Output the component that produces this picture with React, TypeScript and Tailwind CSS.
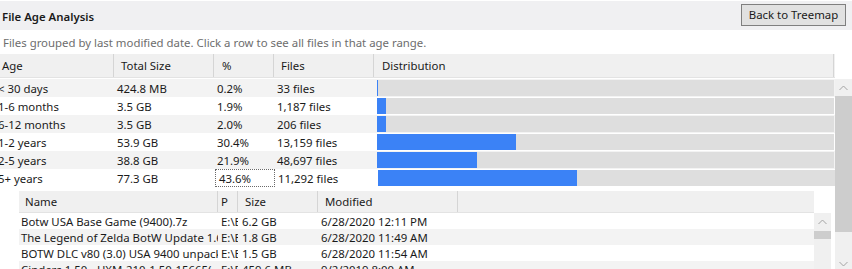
import React from "react";

const rows = [
  { age: "< 30 days", size: "424.8 MB", pct: "0.2%", files: "33 files", w: 0.2 },
  { age: "1-6 months", size: "3.5 GB", pct: "1.9%", files: "1,187 files", w: 1.9 },
  { age: "6-12 months", size: "3.5 GB", pct: "2.0%", files: "206 files", w: 2.0 },
  { age: "1-2 years", size: "53.9 GB", pct: "30.4%", files: "13,159 files", w: 30.4 },
  { age: "2-5 years", size: "38.8 GB", pct: "21.9%", files: "48,697 files", w: 21.9 },
  { age: "5+ years", size: "77.3 GB", pct: "43.6%", files: "11,292 files", w: 43.6 },
];

const files = [
  { name: "Botw USA Base Game (9400).7z", p: "E:\\BOTW", size: "6.2 GB", mod: "6/28/2020 12:11 PM" },
  { name: "The Legend of Zelda BotW Update 1.6.0", p: "E:\\BOTW", size: "1.8 GB", mod: "6/28/2020 11:49 AM" },
  { name: "BOTW DLC v80 (3.0) USA 9400 unpacked", p: "E:\\BOTW", size: "1.5 GB", mod: "6/28/2020 11:54 AM" },
  { name: "Cinders 1.50 - HXM-210-1.50-15665(", p: "E:\\BOTW", size: "459.6 MB", mod: "9/2/2019 8:00 AM" },
];

function Up() {
  return (
    <svg width="9" height="6" viewBox="0 0 9 6" className="block">
      <polyline points="0.5,5 4.5,1 8.5,5" fill="none" stroke="#a3a3a3" strokeWidth="1" />
    </svg>
  );
}
function Down() {
  return (
    <svg width="9" height="6" viewBox="0 0 9 6" className="block">
      <polyline points="0.5,1 4.5,5 8.5,1" fill="none" stroke="#a3a3a3" strokeWidth="1" />
    </svg>
  );
}

export default function App() {
  return (
    <div
      className="w-[852px] h-[269px] overflow-hidden bg-white text-[11.4px] leading-none text-[#1a1a1a] flex flex-col"
      style={{ fontFamily: '"Noto Sans", "Open Sans", sans-serif' }}
    >
      {/* Title bar */}
      <div className="h-[30px] shrink-0 border-t border-white bg-[#f0f0f2] flex justify-between">
        <div className="pl-[2px] self-center pt-[2px] font-semibold text-[11.4px] text-[#1a1a1a]">File Age Analysis</div>
        <button className="mt-[3px] mr-[6px] w-[105px] h-[22px] bg-[#e1e1e1] border border-[#7f7f7f] text-[11.4px] text-[#1a1a1a] flex items-center justify-center">
          Back to Treemap
        </button>
      </div>
      {/* Subtitle */}
      <div className="h-[24px] shrink-0 flex items-center pl-[3px] pt-[1px] text-[#6d6d6d]">
        Files grouped by last modified date. Click a row to see all files in that age range.
      </div>
      {/* Grid header */}
      <div className="h-[25px] shrink-0 flex">
        <div className="w-[835px] overflow-hidden">
          <div className="-ml-[5px] flex h-[24px] w-[840px] bg-[#f0f0f0] border-b border-[#e3e3e3]">
            <div className="w-[119px] border-r border-[#d5d5d5] pl-[7px] flex items-center">Age</div>
            <div className="w-[100px] border-r border-[#d5d5d5] pl-[7px] flex items-center">Total Size</div>
            <div className="w-[60px] border-r border-[#d5d5d5] pl-[8px] flex items-center">%</div>
            <div className="w-[100px] border-r border-[#d5d5d5] pl-[7px] flex items-center">Files</div>
            <div className="w-[460px] border-r border-[#d5d5d5] pl-[8px] flex items-center">Distribution</div>
          </div>
        </div>
      </div>
      {/* Body */}
      <div className="flex flex-1 min-h-0">
        <div className="w-[835px] flex flex-col overflow-hidden">
          {rows.map((r, i) => (
            <div key={r.age} className={`-ml-[5px] flex h-[18px] shrink-0 ${i % 2 === 0 ? "bg-[#f3f3f3]" : "bg-white"}`}>
              <div className="w-[119px] pl-[3px] pt-[1px] flex items-center whitespace-nowrap">{r.age}</div>
              <div className="w-[100px] pl-[3px] pt-[1px] flex items-center">{r.size}</div>
              <div
                className={`w-[60px] pl-[3px] pt-[1px] flex items-center ${
                  i === 5 ? "border border-dotted border-[#6a6a6a] pl-[2px] ml-[1px] w-[59px]" : ""
                }`}
              >
                {r.pct}
              </div>
              <div className="w-[100px] pl-[3px] pt-[1px] flex items-center">{r.files}</div>
              <div className="w-[460px] pl-[3px] py-[1px] pr-0">
                <div className="h-full w-[457px] bg-[#dedede]">
                  <div className="h-full bg-[#3b82f6]" style={{ width: `${Math.max(1, (r.w / 100) * 457)}px` }} />
                </div>
              </div>
            </div>
          ))}
          {/* Files list */}
          <div className="ml-[19px] mt-[4px] w-[812px] flex flex-col flex-1 min-h-0">
            <div className="flex h-[22px] shrink-0">
              <div className="w-[795px] flex bg-[#f0f0f0] border-b border-[#e3e3e3]">
                <div className="w-[199px] border-r border-[#d5d5d5] pl-[6px] flex items-center">Name</div>
                <div className="w-[20px] border-r border-[#d5d5d5] pl-[3px] flex items-center overflow-hidden">P</div>
                <div className="w-[80px] border-r border-[#d5d5d5] pl-[7px] flex items-center">Size</div>
                <div className="w-[140px] border-r border-[#d5d5d5] pl-[7px] flex items-center">Modified</div>
                <div className="flex-1" />
              </div>
            </div>
            <div className="flex flex-1 min-h-0">
              <div className="w-[795px] flex flex-col">
                {files.map((f, i) => (
                  <div key={f.name} className={`flex h-[16px] shrink-0 ${i % 2 === 1 ? "bg-[#f3f3f3]" : "bg-white"}`}>
                    <div className="w-[199px] pl-[2px] pt-[2px] flex items-center overflow-hidden whitespace-nowrap">{f.name}</div>
                    <div className="w-[20px] pl-[3px] pt-[2px] flex items-center overflow-hidden whitespace-nowrap">{f.p}</div>
                    <div className="w-[80px] pl-[4px] pt-[2px] flex items-center whitespace-nowrap">{f.size}</div>
                    <div className="w-[140px] pl-[3px] pt-[2px] flex items-center whitespace-nowrap">{f.mod}</div>
                  </div>
                ))}
              </div>
              <div className="w-[17px] bg-[#f0f0f0] flex flex-col items-center">
                <div className="h-[18px] flex items-center justify-center"><Up /></div>
                <div className="w-full h-[8px] bg-[#cdcdcd]" />
              </div>
            </div>
          </div>
        </div>
        {/* Outer scrollbar */}
        <div className="w-[17px] bg-[#f0f0f0] flex flex-col items-center">
          <div className="h-[17px] flex items-center justify-center shrink-0"><Up /></div>
          <div className="w-full h-[136px] bg-[#cdcdcd] shrink-0" />
          <div className="flex-1" />
          <div className="h-[14px] flex items-end justify-center pb-[2px] shrink-0"><Down /></div>
        </div>
      </div>
    </div>
  );
}
